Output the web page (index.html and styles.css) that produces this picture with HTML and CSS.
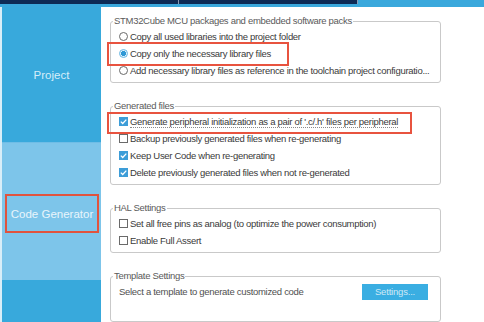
FILE: index.html
```html
<!DOCTYPE html>
<html lang="en">
<head>
  <meta charset="UTF-8" />
  <title>Project Manager : Code Generator</title>
  <link rel="stylesheet" href="styles.css">
</head>
<body>
  <div class="tabs">
    <div class="tab dark"></div>
    <div class="tab dark"></div>
    <div class="tab light"></div>
  </div>
  <div class="band"></div>

  <div class="layout">
    <nav class="sidebar">
      <div class="side-item">Project</div>
      <div class="side-item active">
        <div class="mark">Code Generator</div>
      </div>
      <div class="side-item"></div>
    </nav>

    <main class="content">
      <fieldset class="group">
        <legend>STM32Cube MCU packages and embedded software packs</legend>
        <div class="row"><span class="radio"></span>Copy all used libraries into the project folder</div>
        <div class="row"><span class="radio on"></span>Copy only the necessary library files<span class="highlight hl-copy"></span></div>
        <div class="row"><span class="radio"></span>Add necessary library files as reference in the toolchain project configuratio...</div>
      </fieldset>

      <fieldset class="group">
        <legend>Generated files</legend>
        <div class="row">
          <svg class="box" viewBox="0 0 9 9"><rect x="0" y="0" width="9" height="9" fill="#3d9dd8"/><path d="M1.8 4.6l1.9 1.9L7.3 2.6" stroke="#fff" stroke-width="1.3" fill="none"/></svg>
          <span class="focus">Generate peripheral initialization as a pair of '.c/.h' files per peripheral</span>
          <span class="highlight hl-gen"></span>
        </div>
        <div class="row">
          <svg class="box" viewBox="0 0 9 9"><rect x="0.5" y="0.5" width="8" height="8" fill="#fff" stroke="#6a6a6a"/></svg>
          Backup previously generated files when re-generating
        </div>
        <div class="row">
          <svg class="box" viewBox="0 0 9 9"><rect x="0" y="0" width="9" height="9" fill="#3d9dd8"/><path d="M1.8 4.6l1.9 1.9L7.3 2.6" stroke="#fff" stroke-width="1.3" fill="none"/></svg>
          Keep User Code when re-generating
        </div>
        <div class="row">
          <svg class="box" viewBox="0 0 9 9"><rect x="0" y="0" width="9" height="9" fill="#3d9dd8"/><path d="M1.8 4.6l1.9 1.9L7.3 2.6" stroke="#fff" stroke-width="1.3" fill="none"/></svg>
          Delete previously generated files when not re-generated
        </div>
      </fieldset>

      <fieldset class="group">
        <legend>HAL Settings</legend>
        <div class="row">
          <svg class="box" viewBox="0 0 9 9"><rect x="0.5" y="0.5" width="8" height="8" fill="#fff" stroke="#6a6a6a"/></svg>
          Set all free pins as analog (to optimize the power consumption)
        </div>
        <div class="row">
          <svg class="box" viewBox="0 0 9 9"><rect x="0.5" y="0.5" width="8" height="8" fill="#fff" stroke="#6a6a6a"/></svg>
          Enable Full Assert
        </div>
      </fieldset>

      <fieldset class="group template">
        <legend>Template Settings</legend>
        <div class="row">
          <span class="plain">Select a template to generate customized code</span>
          <button class="settings">Settings...</button>
        </div>
      </fieldset>
    </main>
  </div>
</body>
</html>
```

FILE: styles.css
```css
body {
  margin: 0;
  width: 484px;
  height: 322px;
  overflow: hidden;
  background: #fff;
  font-family: "Liberation Sans", Arial, sans-serif;
  font-size: 9.5px;
  letter-spacing: -0.3px;
  color: #3a3a3a;
}

.tabs {
  display: flex;
  height: 4px;
}

.tab.dark {
  width: 178px;
  background: #0d2a55;
  border-right: 1px solid #8a9bb5;
}

.tab.light {
  flex: 1;
  background: #3aa8dc;
}

.band {
  height: 3px;
  background: #3aa8dc;
}

.layout {
  display: flex;
  height: 315px;
}

.sidebar {
  width: 99px;
  border-left: 2px solid #d9eef8;
  display: flex;
  flex-direction: column;
  font-size: 11.5px;
  letter-spacing: 0;
}

.side-item {
  display: flex;
  align-items: center;
  justify-content: center;
  background: #38a9dc;
  color: #d5edf9;
}

.side-item:first-child {
  height: 135px;
  border-bottom: 1px solid #6fbde6;
}

.side-item.active {
  height: 137px;
  background: #7dc5ea;
  color: #e9f5fc;
  justify-content: flex-start;
}

.side-item:last-child {
  flex: 1;
}

.mark {
  box-sizing: border-box;
  width: 94px;
  height: 39px;
  margin: 4px 0 0 3px;
  border: 2px solid #e0533e;
  display: flex;
  align-items: center;
  justify-content: center;
}

.content {
  flex: 1;
  padding-top: 8px;
  margin-left: 1px;
}

.group {
  box-sizing: border-box;
  width: 331px;
  margin: 0 0 17px 8px;
  padding: 1px 8px 3px 8px;
  border: 1px solid #c9c9c9;
  border-radius: 3px;
  min-inline-size: 0;
}

.group legend {
  margin-left: -6px;
  padding: 0 1px;
  line-height: 12px;
  color: #5a5a5a;
}

.template {
  height: 52px;
  margin-bottom: 0;
}

.row {
  position: relative;
  display: flex;
  align-items: center;
  height: 17px;
  white-space: nowrap;
}

.radio {
  box-sizing: border-box;
  flex: none;
  width: 9px;
  height: 9px;
  margin-right: 2px;
  border: 1px solid #6a6a6a;
  border-radius: 50%;
  background: #fff;
}

.radio.on {
  border-color: #67b7e4;
  background: radial-gradient(circle, #2f98d5 0 2.3px, #e1f1fb 2.8px);
}

.box {
  width: 9px;
  height: 9px;
  margin-right: 2px;
  flex: none;
}

.focus {
  border-bottom: 1px dotted #8a8a8a;
  line-height: 11px;
  margin-top: 1px;
}

.highlight {
  position: absolute;
  border: 2px solid #e8533f;
  box-sizing: border-box;
}

.hl-copy {
  left: -12px;
  top: -3px;
  width: 182px;
  height: 24px;
}

.hl-gen {
  left: -12px;
  top: -1px;
  width: 305px;
  height: 22px;
}

.plain {
  flex: 1;
  color: #505050;
}

.settings {
  width: 66px;
  height: 16px;
  margin-right: 4px;
  padding: 0;
  border: none;
  background: #3aaee2;
  color: #cfe9f6;
  font-family: "Liberation Sans", Arial, sans-serif;
  font-size: 9.5px;
  letter-spacing: -0.2px;
}
```
